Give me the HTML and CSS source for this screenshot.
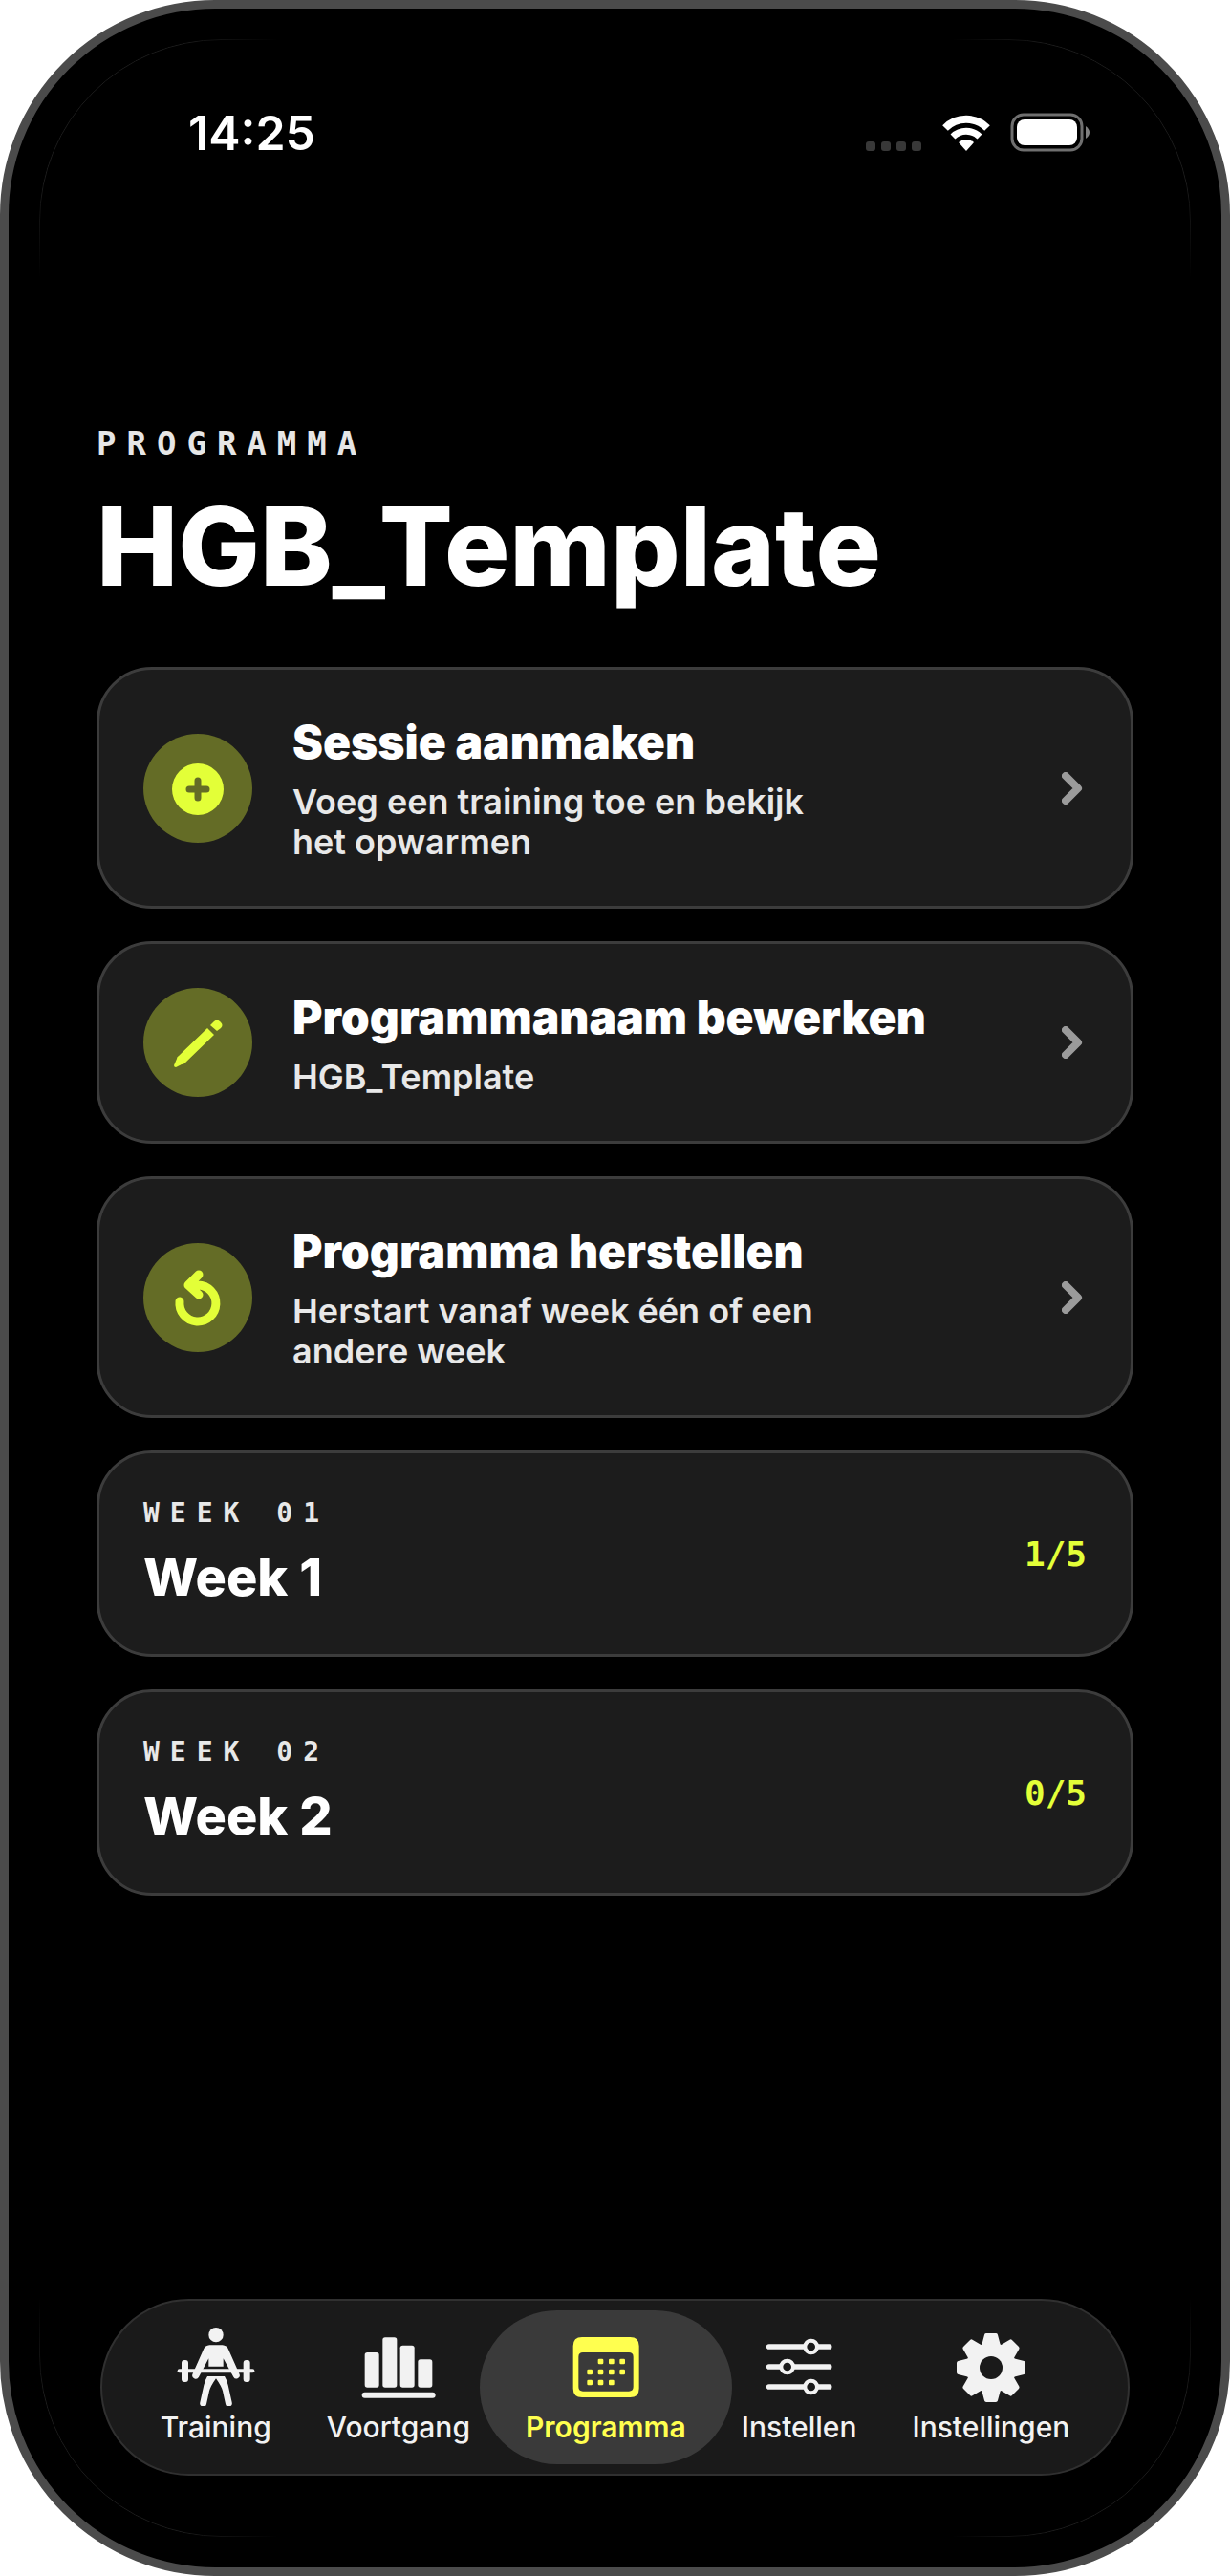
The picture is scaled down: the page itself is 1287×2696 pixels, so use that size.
FILE: index.html
```html
<!DOCTYPE html>
<html lang="nl">
<head>
    <meta charset="UTF-8">
    <meta name="viewport" content="width=device-width, initial-scale=1.0">
    <title>Programma</title>
    <link rel="stylesheet" href="styles.css">
</head>
<body>
    <div class="phone">
        <header class="status-bar">
            <time class="clock">14:25</time>
            <div class="status-icons">
                <div class="signal"><span></span><span></span><span></span><span></span></div>
                <svg class="wifi" viewBox="0 0 50 38" aria-hidden="true">
                    <path d="M3 14A31 31 0 0 1 47 14" fill="none" stroke="#fff" stroke-width="8"/>
                    <path d="M11 23A20 20 0 0 1 39 23" fill="none" stroke="#fff" stroke-width="7"/>
                    <path d="M25 38L17 29A12 12 0 0 1 33 29Z" fill="#fff"/>
                </svg>
                <svg class="battery" viewBox="0 0 82 40" aria-hidden="true">
                    <rect x="1" y="1" width="73" height="37" rx="12" fill="none" stroke="#6f6f6f" stroke-width="3"/>
                    <rect x="6" y="6" width="63" height="27" rx="8" fill="#fff"/>
                    <path d="M78 13Q82 16 82 19.500T78 26Z" fill="#808080"/>
                </svg>
            </div>
        </header>

        <main class="content">
            <p class="eyebrow">PROGRAMMA</p>
            <h1>HGB_Template</h1>

            <div class="card-list">
                <button type="button" class="card">
                    <svg class="card-icon" viewBox="-57 -57 114 114" aria-hidden="true">
                        <circle cy="1" r="27" fill="#e3ff38"/>
                        <path d="M-9 1H9M0 -8V10" stroke="#646c26" stroke-width="7" stroke-linecap="round"/>
                    </svg>
                    <span class="card-text">
                        <span class="card-title">Sessie aanmaken</span>
                        <span class="card-desc">Voeg een training toe en bekijk het opwarmen</span>
                    </span>
                    <svg class="chevron" viewBox="0 0 22 34" aria-hidden="true"><path d="M4 4L17 17L4 30"/></svg>
                </button>

                <button type="button" class="card">
                    <svg class="card-icon" viewBox="-57 -57 114 114" aria-hidden="true">
                        <path d="M10 -15L17 -8L-14 22Q-15 23 -17 23L-23 26Q-25 26 -25 24L-22 17Q-22 15 -20 14Z" fill="#e3ff38"/>
                        <path d="M13 -18L17 -22Q20 -25 23 -22L24 -21Q27 -18 24 -15L20 -12Z" fill="#e3ff38"/>
                    </svg>
                    <span class="card-text">
                        <span class="card-title">Programmanaam bewerken</span>
                        <span class="card-desc">HGB_Template</span>
                    </span>
                    <svg class="chevron" viewBox="0 0 22 34" aria-hidden="true"><path d="M4 4L17 17L4 30"/></svg>
                </button>

                <button type="button" class="card">
                    <svg class="card-icon" viewBox="-57 -57 114 114" aria-hidden="true">
                        <path d="M-19 4A19 19 0 1 0 0 -13H-9M1 -24L-10 -13L1 -3" fill="none" stroke="#e3ff38" stroke-width="9" stroke-linecap="round" stroke-linejoin="round"/>
                    </svg>
                    <span class="card-text">
                        <span class="card-title">Programma herstellen</span>
                        <span class="card-desc">Herstart vanaf week één of een andere week</span>
                    </span>
                    <svg class="chevron" viewBox="0 0 22 34" aria-hidden="true"><path d="M4 4L17 17L4 30"/></svg>
                </button>

                <button type="button" class="card week">
                    <span class="card-text">
                        <span class="week-label">WEEK 01</span>
                        <span class="week-title">Week 1</span>
                    </span>
                    <span class="week-count">1/5</span>
                </button>

                <button type="button" class="card week">
                    <span class="card-text">
                        <span class="week-label">WEEK 02</span>
                        <span class="week-title">Week 2</span>
                    </span>
                    <span class="week-count">0/5</span>
                </button>
            </div>
        </main>

        <nav class="tab-bar">
            <a href="#training" class="tab">
                <svg viewBox="0 0 252 252" aria-hidden="true">
                    <circle cx="126" cy="29" r="23"/>
                    <path d="M106 61H146Q160 62 165 74L199 151A10 10 0 0 1 181 161L149 103V128H103V103L72 161A10 10 0 0 1 53 151L87 74Q92 62 106 61Z"/>
                    <rect x="5" y="136" width="242" height="12" rx="6"/>
                    <rect x="18" y="108" width="21" height="69" rx="9"/>
                    <rect x="212" y="108" width="21" height="69" rx="9"/>
                    <path d="M99 159H153Q160 170 164 187L176 241A10 10 0 0 1 156 246L147 205Q143 190 126 166Q109 190 105 205L96 246A10 10 0 0 1 76 241L88 187Q92 170 99 159Z"/>
                </svg>
                <span>Training</span>
            </a>
            <a href="#voortgang" class="tab">
                <svg viewBox="0 0 252 252" aria-hidden="true">
                    <rect x="20" y="84" width="45" height="110" rx="8"/>
                    <rect x="76" y="37" width="45" height="157" rx="8"/>
                    <rect x="131" y="62" width="45" height="132" rx="8"/>
                    <rect x="187" y="106" width="45" height="88" rx="8"/>
                    <rect x="11" y="209" width="231" height="18" rx="9"/>
                </svg>
                <span>Voortgang</span>
            </a>
            <a href="#programma" class="tab active" aria-current="page">
                <svg viewBox="0 0 252 252" aria-hidden="true">
                    <path fill-rule="evenodd" d="M51 36H202Q230 36 230 64V197Q230 225 202 225H51Q23 225 23 197V64Q23 36 51 36ZM54 84Q40 84 40 98V192Q40 206 54 206H198Q212 206 212 192V98Q212 84 198 84Z"/>
                    <rect x="101" y="104" width="17" height="17" rx="4"/>
                    <rect x="135" y="104" width="17" height="17" rx="4"/>
                    <rect x="169" y="104" width="17" height="17" rx="4"/>
                    <rect x="67" y="137" width="17" height="17" rx="4"/>
                    <rect x="101" y="137" width="17" height="17" rx="4"/>
                    <rect x="135" y="137" width="17" height="17" rx="4"/>
                    <rect x="169" y="137" width="17" height="17" rx="4"/>
                    <rect x="67" y="170" width="17" height="17" rx="4"/>
                    <rect x="101" y="170" width="17" height="17" rx="4"/>
                    <rect x="135" y="170" width="17" height="17" rx="4"/>
                </svg>
                <span>Programma</span>
            </a>
            <a href="#instellen" class="tab">
                <svg viewBox="0 0 252 252" aria-hidden="true">
                    <path d="M32 66H221M32 129H221M32 192H221" stroke="#f2f2f2" stroke-width="17" stroke-linecap="round"/>
                    <g fill="#1a1a1a" stroke="#f2f2f2" stroke-width="12">
                        <circle cx="164" cy="66" r="19"/>
                        <circle cx="89" cy="129" r="19"/>
                        <circle cx="164" cy="192" r="19"/>
                    </g>
                </svg>
                <span>Instellen</span>
            </a>
            <a href="#instellingen" class="tab">
                <svg viewBox="-126 -132 252 252" aria-hidden="true">
                    <defs>
                        <path id="tooth" d="M-15 -102H15L23 -72H-23Z" stroke="#f2f2f2" stroke-width="12" stroke-linejoin="round"/>
                    </defs>
                    <circle r="79"/>
                    <use href="#tooth"/>
                    <use href="#tooth" transform="rotate(45)"/>
                    <use href="#tooth" transform="rotate(90)"/>
                    <use href="#tooth" transform="rotate(135)"/>
                    <use href="#tooth" transform="rotate(180)"/>
                    <use href="#tooth" transform="rotate(225)"/>
                    <use href="#tooth" transform="rotate(270)"/>
                    <use href="#tooth" transform="rotate(315)"/>
                    <circle r="36" fill="#1a1a1a"/>
                </svg>
                <span>Instellingen</span>
            </a>
        </nav>
    </div>
</body>
</html>
```
FILE: styles.css
```css
* {
    box-sizing: border-box;
}
body {
    margin: 0;
    background-color: #fff;
    color: #fff;
    font-family: Inter, "Liberation Sans", sans-serif;
}
.phone {
    position: relative;
    display: flex;
    flex-direction: column;
    min-height: 100vh;
    padding: 110px 92px 96px;
    background-color: #000;
    border: 9px solid #4b4b4b;
    border-radius: 225px;
}
/* faint screen edge, only visible in the corners */
.phone::after {
    content: "";
    position: absolute;
    inset: 32px;
    border: 1px solid #1c1c1c;
    border-radius: 190px;
    pointer-events: none;
    mask-image:
        radial-gradient(circle at 0 0, #000 150px, transparent 250px),
        radial-gradient(circle at 100% 0, #000 150px, transparent 250px),
        radial-gradient(circle at 0 100%, #000 150px, transparent 250px),
        radial-gradient(circle at 100% 100%, #000 150px, transparent 250px);
}
.status-bar {
    display: flex;
    justify-content: space-between;
    align-items: center;
    height: 40px;
    padding: 0 46px 0 96px;
}
.clock {
    font-size: 50px;
    font-weight: 600;
    line-height: 40px;
}
.status-icons {
    display: flex;
    align-items: center;
    gap: 22px;
}
.signal {
    display: flex;
    align-self: flex-end;
    gap: 6px;
    margin-bottom: 1px;
}
.signal span {
    width: 10px;
    height: 10px;
    border-radius: 3px;
    background-color: #383838;
}
.wifi {
    width: 50px;
    height: 38px;
    overflow: visible;
}
.battery {
    width: 82px;
    height: 40px;
    overflow: visible;
}
.content {
    flex: 1;
    padding-top: 285px;
}
.eyebrow {
    margin: 0 0 20px;
    font-family: "DejaVu Sans Mono", monospace;
    font-size: 34px;
    font-weight: 700;
    line-height: 40px;
    letter-spacing: 11px;
    color: #e6e6e6;
}
h1 {
    margin: 0 0 58px;
    font-size: 114px;
    font-weight: 800;
    line-height: 136px;
}
.card-list {
    display: flex;
    flex-direction: column;
    gap: 34px;
}
.card {
    display: flex;
    align-items: center;
    gap: 42px;
    width: 100%;
    padding: 46px;
    background-color: #1c1c1c;
    border: 3px solid #3c3c3c;
    border-radius: 58px;
    color: inherit;
    font: inherit;
    text-align: left;
    cursor: pointer;
}
.card-icon {
    flex: none;
    width: 114px;
    height: 114px;
    border-radius: 50%;
    background-color: #646c26;
}
.card-text {
    flex: 1;
    display: flex;
    flex-direction: column;
    gap: 11px;
}
.card-title {
    font-size: 48px;
    font-weight: 900;
    line-height: 60px;
}
.card-desc {
    max-width: 590px;
    font-size: 36px;
    font-weight: 600;
    line-height: 42px;
    color: #e8e8e8;
}
.chevron {
    flex: none;
    width: 22px;
    height: 34px;
    margin-right: 4px;
}
.chevron path {
    fill: none;
    stroke: #9b9b9b;
    stroke-width: 8;
    stroke-linecap: round;
    stroke-linejoin: round;
}
.week .card-text {
    gap: 16px;
}
.week-label {
    font-family: "DejaVu Sans Mono", monospace;
    font-size: 28px;
    font-weight: 700;
    line-height: 34px;
    letter-spacing: 11px;
    color: #e8e8e8;
}
.week-title {
    font-size: 54px;
    font-weight: 800;
    line-height: 68px;
}
.week-count {
    font-family: "DejaVu Sans Mono", monospace;
    font-size: 36px;
    font-weight: 700;
    color: #e3ff38;
}
.tab-bar {
    display: flex;
    justify-content: center;
    gap: 58px;
    margin: 0 4px;
    padding: 26px 0 28px;
    background-color: #1a1a1a;
    border: 2px solid #303030;
    border-radius: 100px;
}
.tab {
    position: relative;
    display: flex;
    flex-direction: column;
    align-items: center;
    gap: 2px;
    color: #f2f2f2;
    font-size: 30px;
    font-weight: 500;
    line-height: 41px;
    text-decoration: none;
}
.tab svg {
    position: relative;
    width: 84px;
    height: 84px;
    fill: currentColor;
}
.tab span {
    position: relative;
}
.tab.active {
    color: #ffff4f;
    font-weight: 600;
}
.tab.active::before {
    content: "";
    position: absolute;
    inset: -16px -48px -18px;
    border-radius: 90px;
    background-color: #3a3a3a;
}
```
